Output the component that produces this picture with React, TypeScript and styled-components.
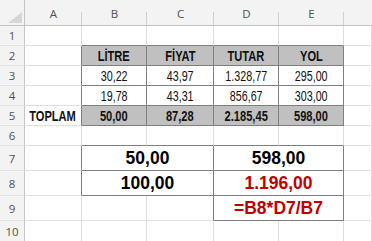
import React from "react";
import styled, { createGlobalStyle, css } from "styled-components";

const GlobalStyle = createGlobalStyle`
  html, body { margin: 0; padding: 0; background: #ffffff; }
  body { font-family: "Liberation Sans", Arial, sans-serif; }
`;

const LIGHT = "#dedede";
const DARK = "#7f7f7f";

const Sheet = styled.div`
  display: grid;
  grid-template-columns: 25px 57px 65px 67px 65px 65px 1fr;
  grid-template-rows: 26px repeat(6, 20px) repeat(3, 25px) 21px;
  width: 372px;
  height: 241px;
  overflow: hidden;
  background: #ffffff;
`;

const Corner = styled.div`
  background: #f3f3f3;
  border-right: 1px solid #c4c4c4;
  border-bottom: 1px solid #c4c4c4;
  display: flex;
  align-items: flex-end;
  justify-content: flex-end;
  padding: 0 2px 2px 0;
`;

const ColHead = styled.div<{ $sep: boolean }>`
  background: ${(p) =>
    p.$sep
      ? `linear-gradient(#cfcfcf, #cfcfcf) right bottom / 1px 13px no-repeat, #f3f3f3`
      : "#f3f3f3"};
  border-bottom: 1px solid #c4c4c4;
  display: flex;
  align-items: center;
  justify-content: center;
  padding-top: 1px;
  font-family: "Open Sans", "Noto Sans", sans-serif;
  font-size: 11.5px;
  color: #505050;
`;

const RowHead = styled.div`
  background: #f3f3f3;
  border-right: 1px solid #c4c4c4;
  border-bottom: 1px solid #e2e2e2;
  display: flex;
  align-items: center;
  justify-content: center;
  font-family: "Open Sans", "Noto Sans", sans-serif;
  font-size: 11.5px;
  color: #505050;
`;

type Tone = "plain" | "head" | "big" | "red";

const toneStyles = {
  plain: css`
    font-family: "Liberation Sans", Arial, sans-serif;
    font-size: 14.5px;
    color: #111111;
  `,
  head: css`
    font-family: "Liberation Sans", Arial, sans-serif;
    font-size: 15px;
    font-weight: 700;
    color: #111111;
  `,
  big: css`
    font-family: "Liberation Sans", Arial, sans-serif;
    font-size: 17.5px;
    font-weight: 700;
    color: #000000;
  `,
  red: css`
    font-family: "Liberation Sans", Arial, sans-serif;
    font-size: 17.5px;
    font-weight: 700;
    color: #c00000;
  `,
};

const Cell = styled.div<{
  $span: number;
  $rd: boolean;
  $bd: boolean;
  $fill: boolean;
  $tone: Tone;
}>`
  grid-column: span ${(p) => p.$span};
  border-right: 1px solid ${(p) => (p.$rd ? DARK : LIGHT)};
  border-bottom: 1px solid ${(p) => (p.$bd ? DARK : LIGHT)};
  background: ${(p) => (p.$fill ? "#c0c0c0" : "#ffffff")};
  display: flex;
  align-items: center;
  justify-content: center;
  white-space: nowrap;
  min-width: 0;
  ${(p) => toneStyles[p.$tone]}
`;

/* Narrow (condensed) label, like the spreadsheet's narrow face */
const Label = styled.span<{ $narrow: boolean }>`
  display: inline-block;
  flex: none;
  transform: ${(p) => (p.$narrow ? "scaleX(0.74)" : "none")};
`;

type CellDef = {
  text?: string;
  span?: number;
  tone?: Tone;
  fill?: boolean;
  boxed?: boolean;
};

const E: CellDef = {};

const rows: CellDef[][] = [
  [E, E, E, E, E, E],
  [
    E,
    { text: "LİTRE", tone: "head", fill: true, boxed: true },
    { text: "FİYAT", tone: "head", fill: true, boxed: true },
    { text: "TUTAR", tone: "head", fill: true, boxed: true },
    { text: "YOL", tone: "head", fill: true, boxed: true },
    E,
  ],
  [
    E,
    { text: "30,22", boxed: true },
    { text: "43,97", boxed: true },
    { text: "1.328,77", boxed: true },
    { text: "295,00", boxed: true },
    E,
  ],
  [
    E,
    { text: "19,78", boxed: true },
    { text: "43,31", boxed: true },
    { text: "856,67", boxed: true },
    { text: "303,00", boxed: true },
    E,
  ],
  [
    { text: "TOPLAM", tone: "head" },
    { text: "50,00", tone: "head", fill: true, boxed: true },
    { text: "87,28", tone: "head", fill: true, boxed: true },
    { text: "2.185,45", tone: "head", fill: true, boxed: true },
    { text: "598,00", tone: "head", fill: true, boxed: true },
    E,
  ],
  [E, E, E, E, E, E],
  [
    E,
    { text: "50,00", span: 2, tone: "big", boxed: true },
    { text: "598,00", span: 2, tone: "big", boxed: true },
    E,
  ],
  [
    E,
    { text: "100,00", span: 2, tone: "big", boxed: true },
    { text: "1.196,00", span: 2, tone: "red", boxed: true },
    E,
  ],
  [E, E, E, { text: "=B8*D7/B7", span: 2, tone: "red", boxed: true }, E],
  [E, E, E, E, E, E],
];

const NCOLS = 6;

const boxedMap: boolean[][] = rows.map((r) => {
  const line: boolean[] = new Array(NCOLS).fill(false);
  let c = 0;
  r.forEach((cell) => {
    const span = cell.span ?? 1;
    for (let i = 0; i < span; i++) line[c + i] = !!cell.boxed;
    c += span;
  });
  return line;
});

const isBoxed = (r: number, c: number) =>
  r >= 0 && r < boxedMap.length && c >= 0 && c < NCOLS ? boxedMap[r][c] : false;

const colLetters = ["A", "B", "C", "D", "E", ""];

const CornerMark = () => (
  <svg width="14" height="11" viewBox="0 0 14 11">
    <polygon points="14,0 14,11 0,11" fill="#d6d6d6" />
  </svg>
);

export default function App() {
  return (
    <>
      <GlobalStyle />
      <Sheet>
        <Corner>
          <CornerMark />
        </Corner>
        {colLetters.map((l, i) => (
          <ColHead key={`h${i}`} $sep={i < 5}>
            {l}
          </ColHead>
        ))}
        {rows.map((r, ri) => {
          let c = 0;
          return (
            <React.Fragment key={`r${ri}`}>
              <RowHead>{ri + 1}</RowHead>
              {r.map((cell, ci) => {
                const span = cell.span ?? 1;
                const start = c;
                const end = c + span - 1;
                c += span;
                const rd = isBoxed(ri, end) || isBoxed(ri, end + 1);
                let bd = false;
                for (let k = start; k <= end; k++) {
                  if (isBoxed(ri, k) || isBoxed(ri + 1, k)) bd = true;
                }
                const tone = cell.tone ?? "plain";
                return (
                  <Cell
                    key={`c${ri}-${ci}`}
                    $span={span}
                    $rd={rd}
                    $bd={bd}
                    $fill={!!cell.fill}
                    $tone={tone}
                  >
                    {cell.text ? (
                      <Label $narrow={tone === "plain" || tone === "head"}>
                        {cell.text}
                      </Label>
                    ) : null}
                  </Cell>
                );
              })}
            </React.Fragment>
          );
        })}
      </Sheet>
    </>
  );
}
